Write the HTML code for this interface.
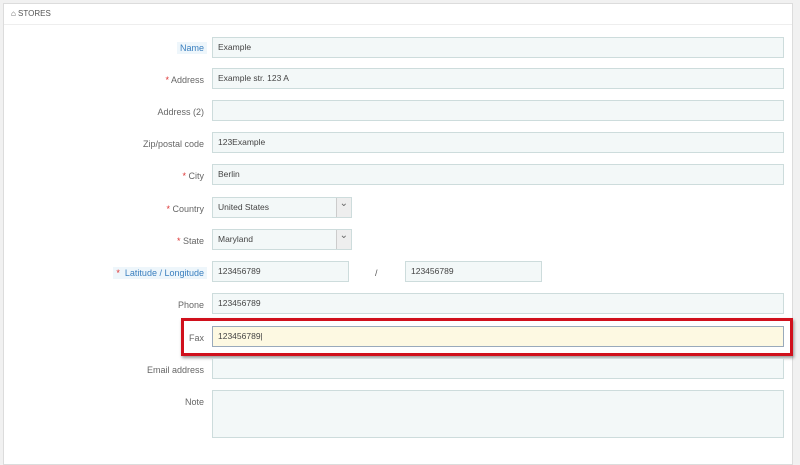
<!DOCTYPE html>
<html><head><style>
body{margin:0;width:800px;height:450px;background:#f1f1f1;font-family:"Liberation Sans",sans-serif;font-size:9px;color:#555;position:relative;overflow:hidden}
.panel{position:absolute;left:3px;top:3px;width:788px;height:460px;background:#fff;border:1px solid #dcdcdc}
.hd{position:absolute;left:11px;top:9px;font-size:8px;color:#555}
.hl{position:absolute;left:4px;top:24px;width:788px;height:1px;background:#eee}
.lb{position:absolute;right:596px;text-align:right;white-space:nowrap;color:#666}
.lb.b{color:#3a7fbf;background:#eef6fb;padding:1px 3px;right:593px}
.r{color:#d33}
.in{position:absolute;left:212px;width:572px;height:21px;background:#f3f8f8;border:1px solid #cddcdc;box-sizing:border-box;padding:5px 5px;font-size:8.5px;color:#444;line-height:9px}
.sel::after{content:"";position:absolute;right:0;top:0;width:14px;height:19px;background:#eee;border-left:1px solid #ccc}
.sel::before{content:"⌄";position:absolute;right:3px;top:1px;z-index:1;font-size:10px;color:#666}
</style></head><body>
<div class="panel"></div>
<div class="hd">&#8962; STORES</div>
<div class="hl"></div>

<div class="lb b" style="top:42px">Name</div><div class="in" style="top:37px">Example</div>
<div class="lb" style="top:75px"><span class="r">*</span> Address</div><div class="in" style="top:68px">Example str. 123 A</div>
<div class="lb" style="top:107px">Address (2)</div><div class="in" style="top:100px"></div>
<div class="lb" style="top:139px">Zip/postal code</div><div class="in" style="top:132px">123Example</div>
<div class="lb" style="top:171px"><span class="r">*</span> City</div><div class="in" style="top:164px">Berlin</div>
<div class="lb" style="top:204px"><span class="r">*</span> Country</div><div class="in sel" style="top:197px;width:140px">United States</div>
<div class="lb" style="top:236px"><span class="r">*</span> State</div><div class="in sel" style="top:229px;width:140px">Maryland</div>
<div class="lb b" style="top:267px"><span class="r">*</span>&nbsp; Latitude / Longitude</div><div class="in" style="top:261px;width:137px">123456789</div>
<div style="position:absolute;left:375px;top:268px">/</div>
<div class="in" style="top:261px;left:405px;width:137px">123456789</div>
<div class="lb" style="top:300px">Phone</div><div class="in" style="top:293px">123456789</div>
<div style="position:absolute;left:181px;top:318px;width:606px;height:32px;border:3px solid #d0101c;box-shadow:1px 2px 3px rgba(0,0,0,.4)"></div>
<div class="lb" style="top:333px">Fax</div><div class="in" style="top:326px;background:#fdf9e2;border-color:#9ab">123456789|</div>
<div class="lb" style="top:365px">Email address</div><div class="in" style="top:358px"></div>
<div class="lb" style="top:397px">Note</div><div class="in" style="top:390px;height:48px"></div>
</body></html>
